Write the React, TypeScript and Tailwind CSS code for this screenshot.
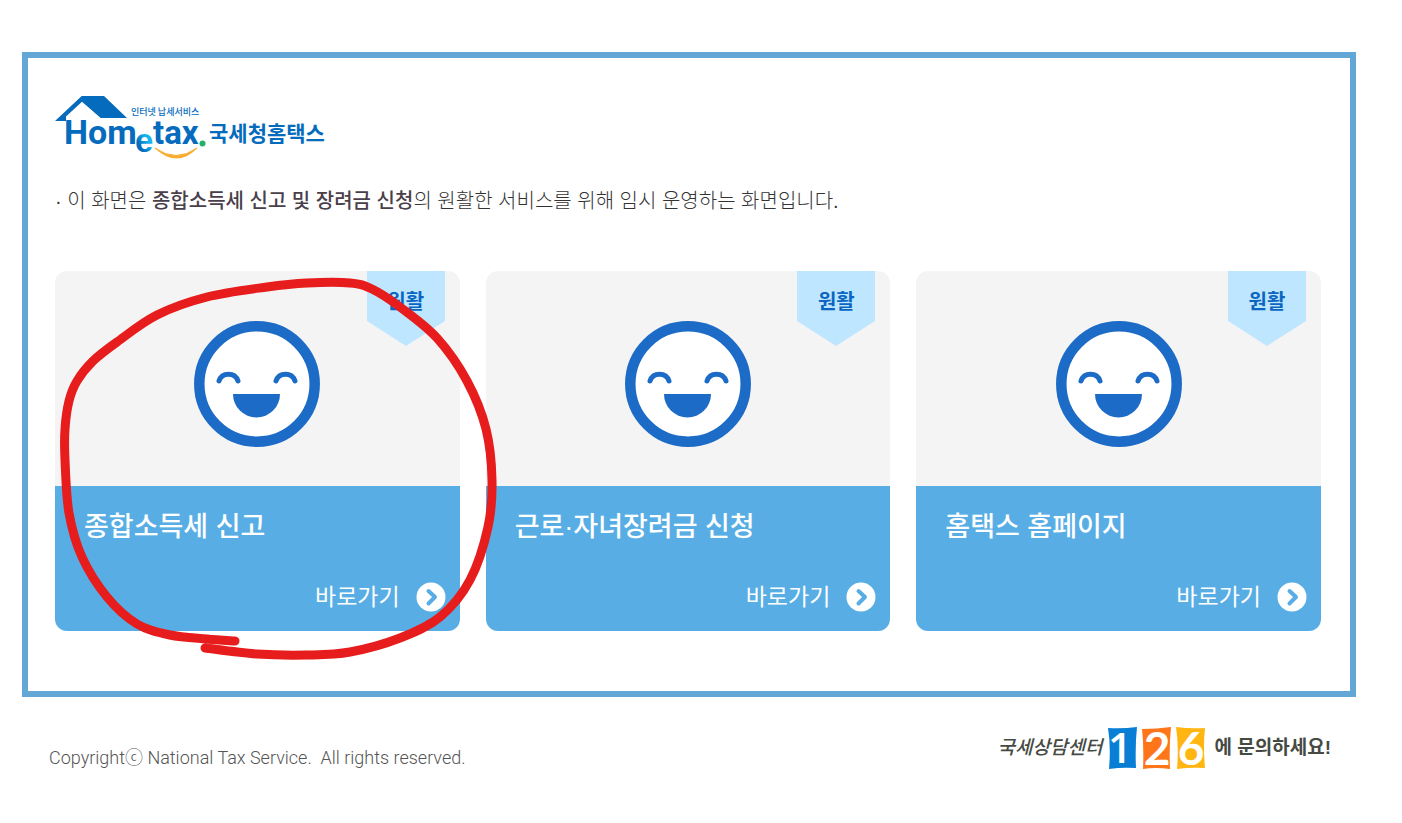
const cards = [
  { title: '종합소득세 신고', status: '원활' },
  { title: '근로·자녀장려금 신청', status: '원활' },
  { title: '홈택스 홈페이지', status: '원활' },
];

const markPoints: [number, number][] = [
  [180, 370], [152, 368], [115, 364], [82, 353], [52, 326], [27, 286], [14, 242],
  [10, 189], [10, 158], [14, 130], [22, 110], [38, 90], [62, 71], [102, 44], [152, 26],
  [212, 16], [252, 12], [295, 12], [317, 18], [345, 36], [382, 67], [412, 110],
  [431, 158], [437, 209], [433, 256], [415, 309], [385, 346], [345, 367],
  [295, 381], [252, 384], [202, 383], [150, 377],
];

function smoothPath(p: [number, number][]) {
  let d = `M${p[0][0]} ${p[0][1]}`;
  for (let i = 0; i < p.length - 1; i++) {
    const a = p[i - 1] ?? p[i];
    const b = p[i];
    const c = p[i + 1];
    const e = p[i + 2] ?? c;
    d += ` C${b[0] + (c[0] - a[0]) / 6} ${b[1] + (c[1] - a[1]) / 6} ${c[0] - (e[0] - b[0]) / 6} ${c[1] - (e[1] - b[1]) / 6} ${c[0]} ${c[1]}`;
  }
  return d;
}

function Logo() {
  return (
    <svg viewBox="0 0 270 64" className="block h-16 w-[270px]" role="img" aria-label="Hometax 국세청홈택스">
      <defs>
        <linearGradient id="e-fill" x1="1" y1="0" x2="0.2" y2="1">
          <stop offset="0.45" stopColor="#16b4ee" />
          <stop offset="0.75" stopColor="#056bbd" />
        </linearGradient>
      </defs>
      <path d="M0 25 26.700 0H49L72 22H45.700L27 5.700 11 20.500V25Z" fill="#056bbd" />
      <g className="font-[Roboto,sans-serif] font-bold" fill="#056bbd">
        <text x="9" y="48" fontSize="34">Hom</text>
        <text x="98" y="48" fontSize="33">tax</text>
      </g>
      <text x="80" y="56" fontSize="33" fill="url(#e-fill)" className="font-['Liberation_Sans',sans-serif] font-bold">e</text>
      <circle cx="147.500" cy="47.500" r="3" fill="#22b169" />
      <path d="M100 52Q121 67 142 52Q122 72 100 52Z" fill="#fbab2b" stroke="#fbab2b" />
      <g className="font-['Noto_Sans_CJK_KR',sans-serif]" fill="#056bbd">
        <text x="76" y="19" fontSize="9" className="font-medium">인터넷 납세서비스</text>
        <text x="154" y="45" fontSize="21" className="font-bold">국세청홈택스</text>
      </g>
    </svg>
  );
}

function Smile() {
  return (
    <svg viewBox="0 0 126 126" className="size-[126px]" aria-hidden="true">
      <circle cx="63" cy="63" r="57.700" fill="#fff" stroke="#1b6bc7" strokeWidth="10.500" />
      <path d="M25 60C28 51 41 51 44 60M82 60C85 51 98 51 101 60" fill="none" stroke="#1b6bc7" strokeWidth="5" strokeLinecap="round" />
      <path d="M39 73H86A23.500 23.500 0 0 1 39 73Z" fill="#1b6bc7" />
    </svg>
  );
}

function Card({ title, status }: { title: string; status: string }) {
  return (
    <article className="overflow-hidden rounded-xl">
      <div className="relative flex h-[215px] items-center justify-center bg-[#f4f4f4] pt-2.5">
        <Smile />
        <div className="absolute top-0 right-[15px] h-[75px] w-[78px]">
          <svg viewBox="0 0 78 75" className="absolute inset-0" aria-hidden="true">
            <path d="M0 0H78V50L39 75 0 50Z" fill="#bfe6ff" />
          </svg>
          <span className="relative block pt-[17px] text-center text-xl leading-7 font-bold text-[#0b66c2]">{status}</span>
        </div>
      </div>
      <div className="flex h-[145px] flex-col justify-between bg-[#58aee4] pt-[21px] pr-3.5 pb-[18px] pl-[29px] text-white">
        <h2 className="text-[27px] leading-10 font-medium">{title}</h2>
        <a href="#" aria-label={`${title} 바로가기`} className="flex items-center gap-4 self-end text-[23px] leading-8">
          바로가기
          <svg viewBox="0 0 30 30" className="size-[30px]" aria-hidden="true">
            <circle cx="15" cy="15" r="14.500" fill="#fff" />
            <path d="M12.500 9 19 15 12.500 21.500" fill="none" stroke="#58aee4" strokeWidth="4" strokeLinecap="round" strokeLinejoin="round" />
          </svg>
        </a>
      </div>
    </article>
  );
}

function CallCenter() {
  return (
    <p className="flex items-center text-[#454a43]">
      <span className="text-[19px] font-medium italic">국세상담센터</span>
      <svg viewBox="0 0 100 44" className="mx-1 h-11 w-[100px] overflow-visible" role="img" aria-label="126">
        <path d="M1 2Q15 3 30 1Q28 20 29 42Q15 41 2 43Q4 20 1 2Z" fill="#087fd5" />
        <path d="M35 3Q50 3 64 1Q62 20 63 43Q48 41 36 43Q37 20 35 3Z" fill="#ff7519" />
        <path d="M69 1Q84 3 98 2Q96 20 98 42Q84 41 70 43Q72 20 69 1Z" fill="#ffb613" />
        <g className="font-[Lato,sans-serif] font-bold" fill="#fff" textAnchor="middle" fontSize="46">
          <text x="13" y="37" fontSize="42" className="font-['Open_Sans',sans-serif] font-semibold">1</text>
          <text x="50" y="39">2</text>
          <text x="84" y="39">6</text>
        </g>
      </svg>
      <span className="pl-1 text-[19px] font-bold">에 문의하세요!</span>
    </p>
  );
}

export default function App() {
  return (
    <div className="min-h-screen bg-white pt-[52px] pr-[46px] pb-12 pl-[22px] font-['Liberation_Sans','Noto_Sans_CJK_KR',sans-serif]">
      <main className="border-6 border-[#62a7d6] pt-[38px] pr-[29px] pb-[60px] pl-[27px]">
        <h1>
          <Logo />
        </h1>
        <p className="mt-[26px] text-[20px] leading-[30px] font-light text-[#333]">
          · 이 화면은 <strong className="font-medium text-[#4a3f4a]">종합소득세 신고 및 장려금 신청</strong>의 원활한 서비스를 위해 임시 운영하는 화면입니다.
        </p>
        <div className="relative mt-[55px] grid grid-cols-3 gap-[26px]">
          {cards.map((card) => (
            <Card key={card.title} {...card} />
          ))}
          <svg viewBox="0 0 450 400" className="pointer-events-none absolute top-0 left-0 h-[400px] w-[450px]" aria-hidden="true">
            <path d={smoothPath(markPoints)} fill="none" stroke="#e71c1c" strokeWidth="9" strokeLinecap="round" strokeLinejoin="round" />
          </svg>
        </div>
      </main>
      <footer className="flex items-center justify-between pt-[29px] pr-[25px] pl-[27px]">
        <p className="pt-5 font-[Roboto,'Noto_Sans_CJK_KR',sans-serif] text-[18px] leading-6 font-light text-[#555]">
          Copyrightⓒ National Tax Service.&nbsp; All rights reserved.
        </p>
        <CallCenter />
      </footer>
    </div>
  );
}
